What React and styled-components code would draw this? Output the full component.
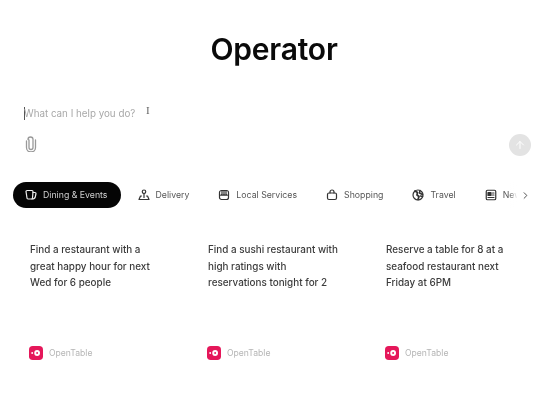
import React from 'react'
import styled, { createGlobalStyle } from 'styled-components'
import { FiArrowUp, FiChevronRight } from 'react-icons/fi'

const GlobalStyle = createGlobalStyle`
  html, body {
    margin: 0;
    background: #fff;
    overflow: hidden;
  }
  body {
    font-family: Inter, "Liberation Sans", sans-serif;
  }
`

const Page = styled.div`
  width: 560px;
  height: 404px;
  box-sizing: border-box;
  padding-top: 32px;
  overflow: hidden;
  filter: blur(0.5px);
`

const Title = styled.h1`
  margin: 0;
  width: 548px;
  text-align: center;
  font-size: 30px;
  line-height: 34px;
  font-weight: 600;
  letter-spacing: -0.2px;
  color: #0a0a0a;
`

const Composer = styled.div`
  margin-top: 39px;
  padding: 0 29px 0 24px;
  display: flex;
  flex-direction: column;
`

const PromptRow = styled.div`
  display: flex;
  align-items: center;
  height: 16px;
`

const Caret = styled.span`
  width: 1px;
  height: 13px;
  background: #555;
`

const Placeholder = styled.span`
  font-size: 9.8px;
  color: #a8a8a8;
  width: 121px;
  margin-left: -1px;
`

const Cursor = styled.span`
  font-family: "Liberation Serif", serif;
  font-size: 11px;
  color: #666;
  margin: -7px 0 0 1px;
`

const ActionRow = styled.div`
  margin-top: 13px;
  height: 22px;
  display: flex;
  align-items: center;
  justify-content: space-between;
  color: #999;
`

const AttachIcon = styled.svg`
  width: 14px;
  height: 16px;
  margin-bottom: 3px;
`

const SendButton = styled.div`
  width: 22px;
  height: 22px;
  border-radius: 50%;
  background: #e3e3e3;
  color: #fff;
  font-size: 12px;
  display: flex;
  align-items: center;
  justify-content: center;
`

const TabsWrap = styled.div`
  position: relative;
  margin: 26px 0 0 13px;
  width: 520px;
  overflow: hidden;
`

const Tabs = styled.div`
  display: flex;
  gap: 5px;
  white-space: nowrap;
`

const Tab = styled.div`
  flex: none;
  height: 26px;
  padding: 0 ${p => (p.$active ? '13px' : '12px')} 0 12px;
  border-radius: 13px;
  display: flex;
  align-items: center;
  gap: 6px;
  font-size: 8.75px;
  color: ${p => (p.$active ? '#d0d0d0' : '#555')};
  background: ${p => (p.$active ? '#050505' : 'transparent')};

  svg {
    flex: none;
    color: ${p => (p.$active ? '#eee' : '#333')};
  }
`

const TabsFade = styled.div`
  position: absolute;
  top: 0;
  right: 0;
  width: 24px;
  height: 26px;
  box-sizing: border-box;
  padding-right: 2px;
  background: linear-gradient(to right, rgba(255, 255, 255, 0), #fff 35%);
  color: #444;
  font-size: 11px;
  display: flex;
  align-items: center;
  justify-content: flex-end;
`

const Cards = styled.div`
  margin: 33px 0 0 29px;
  display: grid;
  grid-template-columns: repeat(3, 178px);
`

const Card = styled.div`
  height: 119px;
  display: flex;
  flex-direction: column;
  justify-content: space-between;
`

const CardText = styled.p`
  margin: 0 0 0 1px;
  width: 134px;
  font-size: 9.9px;
  line-height: 16.5px;
  font-weight: 500;
  color: #3c3c3c;
`

const Source = styled.div`
  display: flex;
  align-items: center;
  gap: 6px;
  font-size: 8.6px;
  color: #b5b5b5;
`

const IconSvg = ({ children }) => (
  <svg width="12" height="12" viewBox="0 0 24 24" fill="none" stroke="currentColor" strokeWidth="2.4" strokeLinecap="round" strokeLinejoin="round">
    {children}
  </svg>
)

const DiningIcon = () => (
  <IconSvg>
    <path d="M2 5c0-1 1-2 2-2h10c1 0 2 1 2 2l-1 13c0 1-1 2-2 2H6c-1 0-2-1-2-2L2 5z" />
    <path d="M16 7h4c1 0 2 1 2 2l-1.500 7c-.4 2-3 4-6.500 4" />
  </IconSvg>
)

const DeliveryIcon = () => (
  <IconSvg>
    <circle cx="12" cy="5.500" r="3.500" />
    <path d="M12 9v8" />
    <path d="M7 14H5l-3 7h20l-3-7h-2" />
  </IconSvg>
)

const StoreIcon = () => (
  <IconSvg>
    <path d="M3 7a4 4 0 0 1 4-4h10a4 4 0 0 1 4 4v10a4 4 0 0 1-4 4H7a4 4 0 0 1-4-4V7z" />
    <path d="M3 11c1.500 2 4 2 4.500 0 .5 2 4 2 4.500 0 .5 2 4 2 4.500 0 .5 2 3 2 4.500 0" />
    <path d="M8 3v8M12 3v8M16 3v8" />
  </IconSvg>
)

const BagIcon = () => (
  <IconSvg>
    <rect x="3" y="8" width="18" height="13" rx="3" />
    <path d="M8 8V6a4 4 0 0 1 8 0v2" />
  </IconSvg>
)

const GlobeIcon = () => (
  <IconSvg>
    <circle cx="12" cy="12" r="10" />
    <path d="M6 4l5 3-1 5 4 3-2 6" strokeWidth="3.500" />
    <path d="M16 3l-1 5 6 3M17 14l4 1" strokeWidth="3" />
  </IconSvg>
)

const NewsIcon = () => (
  <IconSvg>
    <rect x="2.500" y="2.500" width="19" height="19" rx="2.500" />
    <rect x="6" y="7" width="6" height="6" fill="currentColor" />
    <path d="M15 8h3M15 12h3M6 17h12" />
  </IconSvg>
)

const OpenTableLogo = () => (
  <svg width="14" height="14" viewBox="0 0 15 15">
    <rect width="15" height="15" rx="4" fill="#e5175a" />
    <circle cx="8.700" cy="7.500" r="3.100" fill="#fff" />
    <circle cx="8.700" cy="7.500" r="1" fill="#e5175a" />
    <circle cx="3.400" cy="7.500" r="1" fill="#fff" />
  </svg>
)

const tabs = [
  { label: 'Dining & Events', icon: <DiningIcon />, active: true },
  { label: 'Delivery', icon: <DeliveryIcon /> },
  { label: 'Local Services', icon: <StoreIcon /> },
  { label: 'Shopping', icon: <BagIcon /> },
  { label: 'Travel', icon: <GlobeIcon /> },
  { label: 'News', icon: <NewsIcon /> },
]

const prompts = [
  'Find a restaurant with a great happy hour for next Wed for 6 people',
  'Find a sushi restaurant with high ratings with reservations tonight for 2',
  'Reserve a table for 8 at a seafood restaurant next Friday at 6PM',
]

const App = () => {
  return (
    <Page>
      <GlobalStyle />
      <Title>Operator</Title>
      <Composer>
        <PromptRow>
          <Caret />
          <Placeholder>What can I help you do?</Placeholder>
          <Cursor>I</Cursor>
        </PromptRow>
        <ActionRow>
          <AttachIcon viewBox="0 0 14 16" fill="none" stroke="currentColor" strokeWidth="1.300" strokeLinecap="round">
            <path d="M5 4v7.500a2 2 0 0 0 4 0V3.500a2.500 2.500 0 0 0-5 0 M2.500 5v6.500a4.500 4.500 0 0 0 9 0V4" />
          </AttachIcon>
          <SendButton><FiArrowUp /></SendButton>
        </ActionRow>
      </Composer>
      <TabsWrap>
        <Tabs>
          {tabs.map(tab => (
            <Tab key={tab.label} $active={tab.active}>
              {tab.icon}
              {tab.label}
            </Tab>
          ))}
        </Tabs>
        <TabsFade><FiChevronRight /></TabsFade>
      </TabsWrap>
      <Cards>
        {prompts.map(text => (
          <Card key={text}>
            <CardText>{text}</CardText>
            <Source>
              <OpenTableLogo />
              OpenTable
            </Source>
          </Card>
        ))}
      </Cards>
    </Page>
  )
}

export default App
